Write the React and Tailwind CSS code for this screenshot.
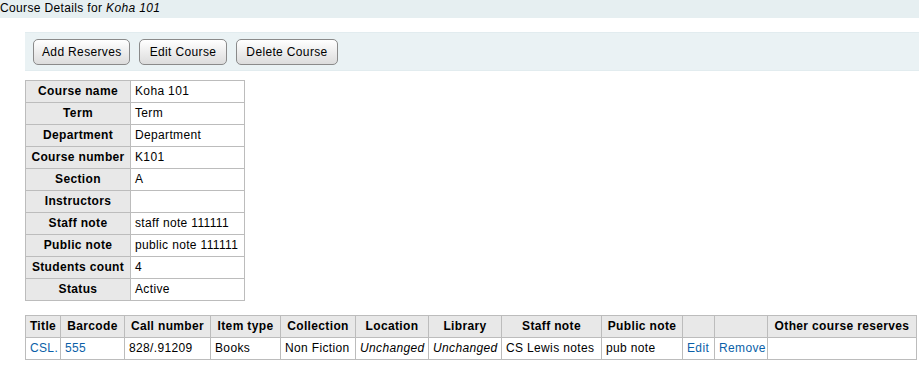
import React from 'react';

const details = [
  ['Course name', 'Koha 101'],
  ['Term', 'Term'],
  ['Department', 'Department'],
  ['Course number', 'K101'],
  ['Section', 'A'],
  ['Instructors', ''],
  ['Staff note', 'staff note 111111'],
  ['Public note', 'public note 111111'],
  ['Students count', '4'],
  ['Status', 'Active'],
];

// header label + column width in px
const headers = [
  ['Title', 35],
  ['Barcode', 64],
  ['Call number', 86],
  ['Item type', 70],
  ['Collection', 75],
  ['Location', 73],
  ['Library', 73],
  ['Staff note', 100],
  ['Public note', 81],
  ['', 32],
  ['', 53],
  ['Other course reserves', 149],
];

const btn =
  'h-[26px] px-[8px] rounded-[5px] border border-[#8a8a8a] bg-gradient-to-b from-white to-[#dcdcdc] text-[12px] text-black leading-none whitespace-nowrap';

const th = 'border border-[#bcbcbc] bg-[#e8e8e8] font-bold px-[3px] py-[3px] text-center whitespace-nowrap';
const td = 'border border-[#bcbcbc] bg-white px-[4px] py-[3px] text-left whitespace-nowrap';
const link = 'text-[#0b5fa8]';

export default function App() {
  return (
    <div className="w-[919px] h-[365px] bg-white text-[12px] leading-[15px] tracking-[0.35px] text-black font-['Liberation_Sans',Arial,sans-serif]">
      {/* page title bar */}
      <div className="h-[18px] bg-[#e6eff1] pt-[1px]">
        Course Details for <i>Koha 101</i>
      </div>

      <div className="pl-[25px] pt-[14px]">
        {/* toolbar */}
        <div className="h-[39px] bg-[#eaf2f4] border-y border-[#e2ecef] flex items-center gap-[9px] pl-[8px]">
          <button className={`${btn} w-[97px]`}>Add Reserves</button>
          <button className={`${btn} w-[88px]`}>Edit Course</button>
          <button className={`${btn} w-[102px]`}>Delete Course</button>
        </div>

        {/* course details */}
        <table className="mt-[9px] border-collapse table-fixed w-[219px]">
          <colgroup>
            <col className="w-[105px]" />
            <col className="w-[114px]" />
          </colgroup>
          <tbody>
            {details.map(([label, value]) => (
              <tr key={label} className="h-[22px]">
                <th className={th}>{label}</th>
                <td className={td}>{value}</td>
              </tr>
            ))}
          </tbody>
        </table>

        {/* reserves */}
        <table className="mt-[14px] border-collapse table-fixed w-[891px]">
          <colgroup>
            {headers.map(([, w], i) => (
              <col key={i} style={{ width: w }} />
            ))}
          </colgroup>
          <thead>
            <tr className="h-[22px]">
              {headers.map(([h], i) => (
                <th key={i} className={th}>{h}</th>
              ))}
            </tr>
          </thead>
          <tbody>
            <tr className="h-[21px]">
              <td className={td}><a className={link}>CSL.</a></td>
              <td className={td}><a className={link}>555</a></td>
              <td className={td}>828/.91209</td>
              <td className={td}>Books</td>
              <td className={td}>Non Fiction</td>
              <td className={`${td} px-[3px]`}><i>Unchanged</i></td>
              <td className={`${td} px-[3px]`}><i>Unchanged</i></td>
              <td className={td}>CS Lewis notes</td>
              <td className={td}>pub note</td>
              <td className={td}><a className={link}>Edit</a></td>
              <td className={`${td} px-[3px]`}><a className={link}>Remove</a></td>
              <td className={td}></td>
            </tr>
          </tbody>
        </table>
      </div>
    </div>
  );
}
